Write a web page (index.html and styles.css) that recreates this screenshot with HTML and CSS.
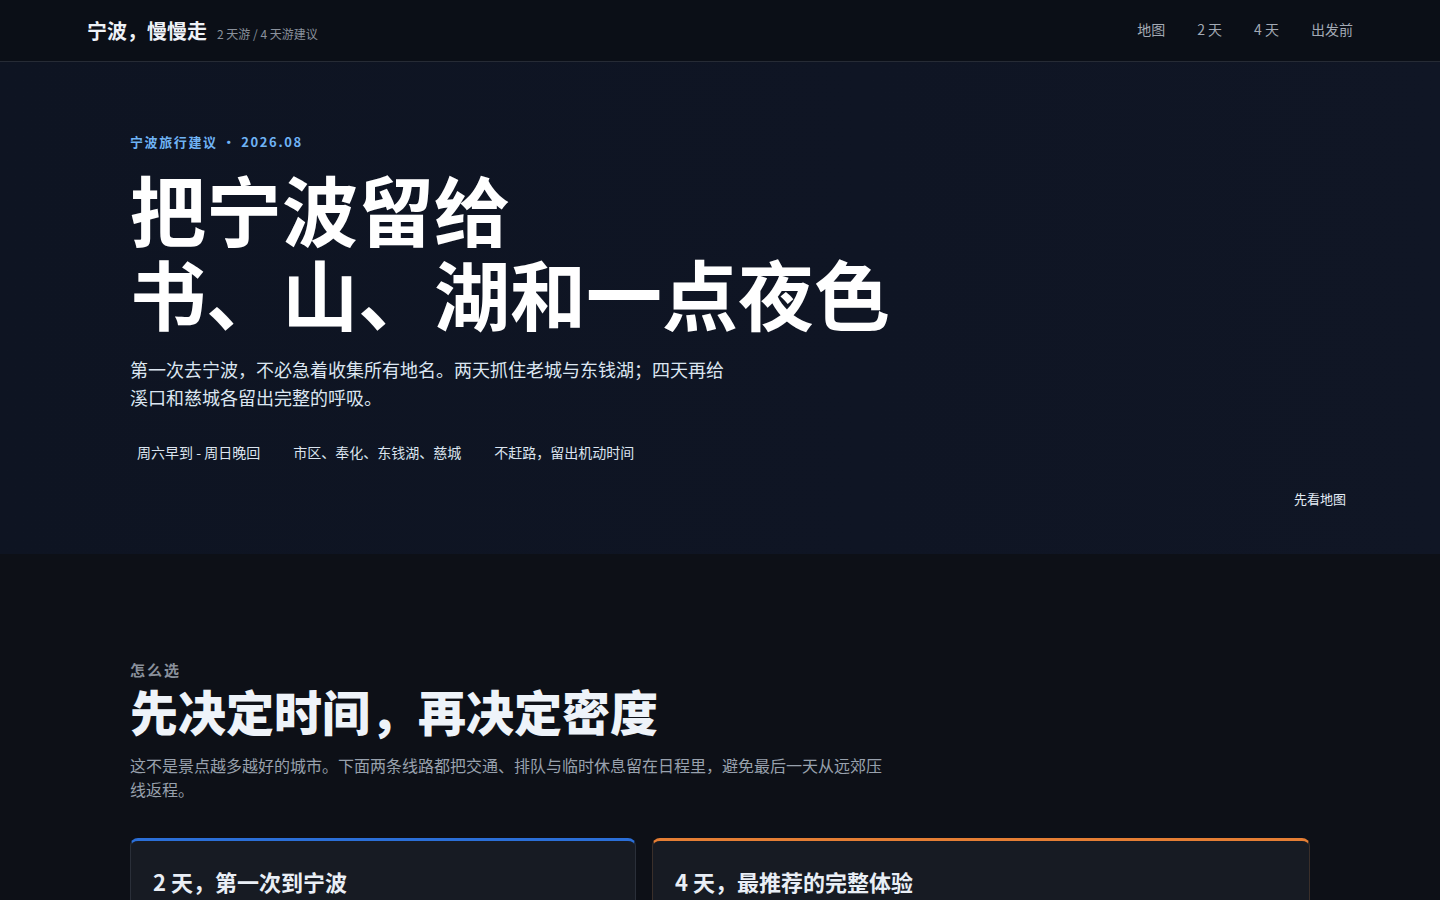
FILE: index.html
```html
<!DOCTYPE html>
<html lang="zh-CN">
<head>
<meta charset="utf-8">
<title>宁波，慢慢走</title>
<link rel="stylesheet" href="styles.css">
</head>
<body>
<header class="topbar">
  <div class="brand">
    <span class="brand-name">宁波，慢慢走</span>
    <span class="brand-sub">2 天游 / 4 天游建议</span>
  </div>
  <nav class="nav">
    <a href="#map">地图</a>
    <a href="#d2">2 天</a>
    <a href="#d4">4 天</a>
    <a href="#prep">出发前</a>
  </nav>
</header>

<section class="hero">
  <div class="hero-inner">
    <p class="eyebrow">宁波旅行建议 · 2026.08</p>
    <h1 class="hero-title"><span class="line">把宁波留给</span><span class="line">书、山、湖和一点夜色</span></h1>
    <p class="hero-lead">第一次去宁波，不必急着收集所有地名。两天抓住老城与东钱湖；四天再给溪口和慈城各留出完整的呼吸。</p>
    <ul class="tags">
      <li class="tag">周六早到 - 周日晚回</li>
      <li class="tag">市区、奉化、东钱湖、慈城</li>
      <li class="tag">不赶路，留出机动时间</li>
    </ul>
  </div>
  <div class="hero-foot">
    <a class="map-link" href="#map">先看地图</a>
  </div>
</section>

<section class="choose">
  <div class="choose-inner">
    <p class="kicker">怎么选</p>
    <h2 class="section-title">先决定时间，再决定密度</h2>
    <p class="section-desc">这不是景点越多越好的城市。下面两条线路都把交通、排队与临时休息留在日程里，避免最后一天从远郊压线返程。</p>
    <div class="cards">
      <article class="card card-blue" id="d2">
        <h3 class="card-title">2 天，第一次到宁波</h3>
      </article>
      <article class="card card-orange" id="d4">
        <h3 class="card-title">4 天，最推荐的完整体验</h3>
      </article>
    </div>
  </div>
</section>
</body>
</html>
```

FILE: styles.css
```css
* { box-sizing: border-box; }
html, body { margin: 0; padding: 0; }
body {
  background: #0d1017;
  color: #e6ebf2;
  font-family: "Noto Sans CJK SC", "Noto Sans", sans-serif;
  overflow: hidden;
}
a { color: inherit; text-decoration: none; }

.topbar {
  height: 62px;
  display: flex;
  align-items: center;
  justify-content: space-between;
  padding: 0 87px;
  background: #0b0f17;
  border-bottom: 1px solid #262b35;
}
.brand { display: flex; align-items: baseline; gap: 10px; }
.brand-name { font-size: 20px; font-weight: 700; color: #eef2f7; }
.brand-sub { font-size: 12px; color: #8a919c; }
.nav { display: flex; gap: 32px; padding-bottom: 3px; }
.nav a { font-size: 14px; color: #a3aab5; }

.hero {
  background: linear-gradient(90deg, #0e1422 0%, #0f1524 60%, #101625 100%);
  padding: 70px 0 0;
  height: 492px;
}
.hero-inner { width: 1180px; margin: 0 auto; }
.eyebrow {
  margin: 0;
  font-size: 13px;
  line-height: 20px;
  font-weight: 700;
  letter-spacing: 1.6px;
  color: #6fb3f5;
}
.hero-title {
  margin: 14px 0 0;
  font-size: 76px;
  font-weight: 700;
  color: #ffffff;
  letter-spacing: 0;
}
.hero-title .line {
  display: block;
  height: 84px;
  line-height: 84px;
}
.hero-lead {
  margin: 21px 0 0;
  max-width: 600px;
  font-size: 18px;
  line-height: 28px;
  color: #dce6f1;
}
.tags {
  list-style: none;
  margin: 27px 0 0;
  padding: 0;
  display: flex;
  gap: 19px;
}
.tag {
  padding: 0 7px;
  font-size: 14px;
  line-height: 28px;
  color: #dbe4ef;
}
.hero-foot {
  display: flex;
  justify-content: flex-end;
  padding: 19px 94px 0 0;
}
.map-link {
  font-size: 13px;
  line-height: 28px;
  color: #e3ebf5;
}

.choose { padding: 106px 0 0; }
.choose-inner { width: 1180px; margin: 0 auto; }
.kicker {
  margin: 0;
  font-size: 15px;
  line-height: 20px;
  font-weight: 700;
  color: #8a919c;
  letter-spacing: 2px;
}
.section-title {
  margin: 4px 0 0;
  font-size: 48px;
  line-height: 52px;
  font-weight: 900;
  color: #eef3f9;
}
.section-desc {
  margin: 17px 0 0;
  max-width: 760px;
  font-size: 16px;
  line-height: 24px;
  color: #98a1ad;
}
.cards {
  margin-top: 37px;
  display: grid;
  grid-template-columns: 1fr 1.3fr;
  gap: 16px;
}
.card {
  background: #171b23;
  border: 1px solid #2a2f39;
  border-top: 3px solid #2a6fd6;
  border-radius: 8px;
  padding: 24px 22px;
  min-height: 200px;
}
.card-blue { border-top-color: #2b6fd8; }
.card-orange { border-color: #3a2f2a; border-top-color: #e57e34; }
.card-title {
  margin: 0;
  font-size: 22px;
  line-height: 32px;
  font-weight: 700;
  color: #e9eef5;
}
```
